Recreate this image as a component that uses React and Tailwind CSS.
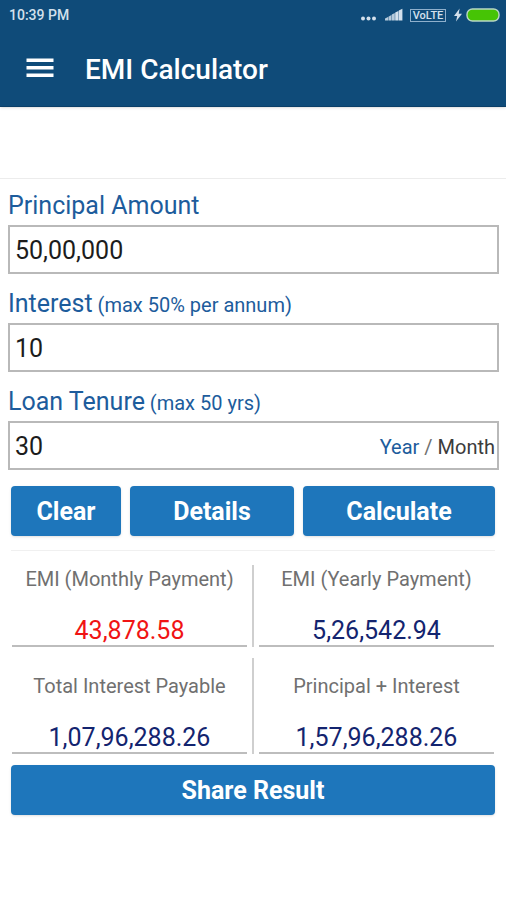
import React, { useState } from 'react';

const formatAmount = (value) =>
  value.toLocaleString('en-IN', { minimumFractionDigits: 2, maximumFractionDigits: 2 });

const calculateLoan = (principal, interest, tenure, unit) => {
  const amount = Number(principal.replace(/,/g, ''));
  const rate = Number(interest) / 1200;
  const months = unit === 'Year' ? Number(tenure) * 12 : Number(tenure);

  if (!amount || !rate || !months) {
    return { monthly: 0, yearly: 0, interest: 0, total: 0 };
  }

  const growth = Math.pow(1 + rate, months);
  const monthly = (amount * rate * growth) / (growth - 1);
  const total = monthly * months;

  return { monthly, yearly: monthly * 12, interest: total - amount, total };
};

const StatusBar = () => (
  <div className="flex h-[30px] items-center justify-between pl-[9px] pr-1.5 text-[#d3e0ec]">
    <span className="text-[14px] font-medium">10:39 PM</span>
    <div className="flex items-center">
      <svg className="h-4 w-[18px]" viewBox="0 0 18 16" fill="currentColor">
        <circle cx="3" cy="11.5" r="2" />
        <circle cx="8.5" cy="11.5" r="2" />
        <circle cx="14" cy="11.5" r="2" />
      </svg>
      <svg className="ml-[7px] h-4 w-[18px]" viewBox="0 0 18 16" fill="currentColor">
        <path d="M0 13.5v-2l3-1.5v3.5zM3.4 13.5V9.7l3-1.8v5.6zM6.8 13.5V7.5l3-1.6v7.6z" opacity="0.85" />
        <path d="M10.2 13.5V5.6l3.2-1.7v9.6zM13.8 13.5V3.6l3.6-1.9v11.8z" />
      </svg>
      <span className="ml-[7px] flex h-[13px] w-9 items-center justify-center border border-[#8fb0cc] text-[11px] font-medium leading-none">
        VoLTE
      </span>
      <svg className="ml-2 h-4 w-2" viewBox="0 0 8 16" fill="currentColor">
        <path d="M5.6 1.5 0 9h3.2L2 14.5 8 6.8H4.7z" />
      </svg>
      <svg className="ml-1 h-4 w-[34px]" viewBox="0 0 34 16">
        <rect x="1" y="2" width="32" height="12" rx="5.5" fill="#46c405" stroke="#b9d7c4" strokeWidth="1.4" />
      </svg>
    </div>
  </div>
);

const Field = ({ id, label, hint, value, onChange, children }) => (
  <div className="mb-[14px]">
    <label htmlFor={id} className="block pb-[3px] text-[25px] leading-8 text-[#1d5c9c]">
      {label}
      {hint && <span className="text-xl"> {hint}</span>}
    </label>
    <div className="flex h-[49px] items-center border-2 border-[#b9b9b9] bg-white pt-0.5">
      <input
        id={id}
        type="text"
        inputMode="numeric"
        value={value}
        onChange={(e) => onChange(e.target.value)}
        className="min-w-0 flex-1 bg-transparent pl-[5px] text-[25px] text-[#1c1c1c] outline-none"
      />
      {children}
    </div>
  </div>
);

const ActionButton = ({ children, onClick }) => (
  <button
    type="button"
    onClick={onClick}
    className="h-[50px] w-full rounded bg-[#1e76bb] pt-0.5 text-[25px] font-bold text-white shadow-sm"
  >
    {children}
  </button>
);

const Result = ({ label, value, color = 'text-[#13246f]' }) => (
  <div className="flex-1 border-b-2 border-[#bdbdbd] text-center">
    <div className="text-xl leading-7 text-[#707070]">{label}</div>
    <div className={`mt-6 text-[25px] leading-7 ${color}`}>{value}</div>
  </div>
);

const Separator = () => <div className="w-0.5 bg-[#cfcfcf]" />;

const App = () => {
  const [principal, setPrincipal] = useState('50,00,000');
  const [interest, setInterest] = useState('10');
  const [tenure, setTenure] = useState('30');
  const [unit, setUnit] = useState('Year');
  const [result, setResult] = useState(() => calculateLoan('50,00,000', '10', '30', 'Year'));

  const handleCalculate = () => {
    setResult(calculateLoan(principal, interest, tenure, unit));
  };

  const handleClear = () => {
    setPrincipal('');
    setInterest('');
    setTenure('');
    setResult(calculateLoan('', '', '', unit));
  };

  return (
    <div className="min-h-screen bg-white font-[Roboto,sans-serif]">
      <header className="border-b border-[#0b3f68] bg-[#0f4b79] shadow">
        <StatusBar />
        <div className="flex h-[76px] items-center pl-[26px]">
          <button type="button" aria-label="Menu" className="text-white">
            <svg className="h-5 w-7" viewBox="0 0 28 20" fill="currentColor">
              <path d="M0.5 0.500h27v3.6h-27zM0.5 8h27v3.6h-27zM0.5 15.5h27v3.6h-27z" />
            </svg>
          </button>
          <h1 className="ml-[31px] pt-1 text-[28px] font-medium text-white">EMI Calculator</h1>
        </div>
      </header>

      <div className="h-[72px] border-b border-[#ececec]" />

      <main className="pl-2 pr-[7px] pt-[11px]">
        <Field id="principal" label="Principal Amount" value={principal} onChange={setPrincipal} />
        <Field
          id="interest"
          label="Interest"
          hint="(max 50% per annum)"
          value={interest}
          onChange={setInterest}
        />
        <Field id="tenure" label="Loan Tenure" hint="(max 50 yrs)" value={tenure} onChange={setTenure}>
          <div className="pr-0.5 text-xl text-[#707070]">
            <button
              type="button"
              onClick={() => setUnit('Year')}
              className={unit === 'Year' ? 'text-[#1d5c9c]' : 'text-[#3c3c3c]'}
            >
              Year
            </button>
            {' / '}
            <button
              type="button"
              onClick={() => setUnit('Month')}
              className={unit === 'Month' ? 'text-[#1d5c9c]' : 'text-[#3c3c3c]'}
            >
              Month
            </button>
          </div>
        </Field>

        <div className="pl-[3px] pr-1 pt-0.5">
          <div className="grid grid-cols-[110fr_164fr_192fr] gap-[9px]">
            <ActionButton onClick={handleClear}>Clear</ActionButton>
            <ActionButton>Details</ActionButton>
            <ActionButton onClick={handleCalculate}>Calculate</ActionButton>
          </div>

          <div className="mt-[14px] border-t border-[#f0f0f0] px-px pb-[11px] pt-[14px]">
            <div className="flex gap-[5px]">
              <Result
                label="EMI (Monthly Payment)"
                value={formatAmount(result.monthly)}
                color="text-[#f01414]"
              />
              <Separator />
              <Result label="EMI (Yearly Payment)" value={formatAmount(result.yearly)} />
            </div>
            <div className="mt-[11px] flex gap-[5px]">
              <div className="flex flex-1 pt-[14px]">
                <Result label="Total Interest Payable" value={formatAmount(result.interest)} />
              </div>
              <Separator />
              <div className="flex flex-1 pt-[14px]">
                <Result label="Principal + Interest" value={formatAmount(result.total)} />
              </div>
            </div>
          </div>

          <ActionButton>Share Result</ActionButton>
        </div>
      </main>
    </div>
  );
};

export default App;
